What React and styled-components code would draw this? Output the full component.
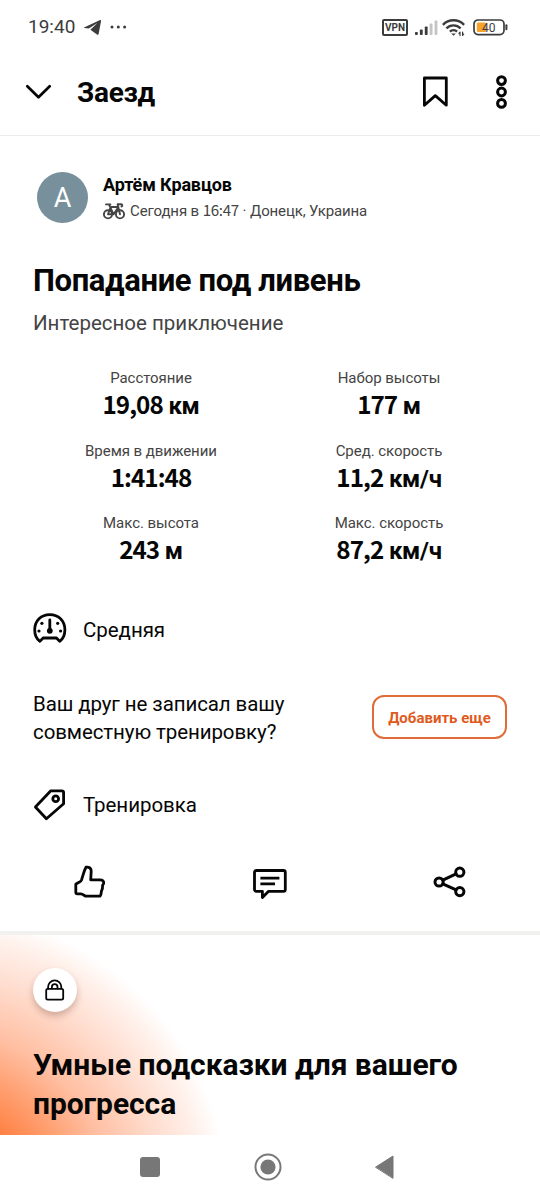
import React from 'react';
import styled, { createGlobalStyle } from 'styled-components';

const GlobalStyle = createGlobalStyle`
  * {
    box-sizing: border-box;
  }
  body {
    margin: 0;
    background: #fff;
    color: #060606;
    font-family: Roboto, 'Liberation Sans', sans-serif;
  }
  svg {
    display: block;
    flex-shrink: 0;
    overflow: visible;
  }
`;

const Screen = styled.div`
  width: 540px;
  height: 1200px;
  display: flex;
  flex-direction: column;
  overflow: hidden;
`;
const StatusBar = styled.div`
  height: 48px;
  padding: 6px 32px 0 28px;
  display: flex;
  align-items: center;
  justify-content: space-between;
  color: #3c3c3c;
`;
const StatusGroup = styled.div`
  display: flex;
  align-items: center;
  gap: ${(props) => props.gap};
`;
const Clock = styled.span`
  font-size: 19px;
  line-height: 22px;
`;
const Vpn = styled.span`
  width: 26px;
  height: 17px;
  border: 2px solid #3c3c3c;
  border-radius: 2px;
  font-size: 10px;
  font-weight: 700;
  line-height: 13px;
  text-align: center;
`;
const Header = styled.header`
  height: 88px;
  padding: 0 32px 0 26px;
  border-bottom: 1px solid #ededed;
  display: flex;
  align-items: center;
`;
const HeaderTitle = styled.h1`
  flex: 1;
  margin: 2px 0 0 26px;
  font-size: 28px;
  font-weight: 700;
  line-height: 34px;
  letter-spacing: -0.3px;
`;
const HeaderActions = styled.div`
  display: flex;
  align-items: center;
  gap: 47px;
`;
const Author = styled.div`
  display: flex;
  padding: 36px 37px 0;
  height: 125px;
  gap: 15px;
`;
const Avatar = styled.div`
  width: 51px;
  height: 51px;
  border-radius: 50%;
  background: #77909c;
  color: #fff;
  font-size: 27px;
  line-height: 53px;
  text-align: center;
`;
const AuthorName = styled.div`
  font-size: 18px;
  font-weight: 700;
  line-height: 26px;
  letter-spacing: -0.15px;
`;
const AuthorMeta = styled.div`
  display: flex;
  align-items: center;
  gap: 5px;
  color: #444;
  font-size: 15px;
  line-height: 26px;
  letter-spacing: -0.12px;
`;
const Title = styled.h2`
  margin: 0;
  padding: 0 33px;
  font-size: 31px;
  font-weight: 700;
  line-height: 40px;
  letter-spacing: -0.37px;
`;
const Description = styled.p`
  margin: 6px 0 0;
  padding: 0 33px;
  color: #444;
  font-size: 20.5px;
  line-height: 32px;
`;
const Stats = styled.div`
  display: grid;
  grid-template-columns: 1fr 1fr;
  grid-auto-rows: 72.5px;
  padding: 27px 32px 0;
  height: 266px;
`;
const Stat = styled.div`
  display: flex;
  flex-direction: column;
  align-items: center;
`;
const StatLabel = styled.span`
  color: #444;
  font-size: 15px;
  line-height: 24px;
  letter-spacing: -0.05px;
`;
const StatValue = styled.span`
  margin-top: 1px;
  font-size: 24px;
  font-weight: 700;
  line-height: 30px;
  letter-spacing: -0.3px;
`;
const Figure = styled.span`
  font-family: 'Noto Sans CJK SC', sans-serif;
  font-size: 1.01em;
  line-height: 1;
  letter-spacing: ${(props) => props.ls};
`;
const Line = styled.div`
  display: flex;
  align-items: center;
  height: ${(props) => props.h};
  padding: 0 33px;
  gap: 16px;
  font-size: 20.5px;
  letter-spacing: -0.05px;
`;
const Invite = styled.div`
  display: flex;
  align-items: center;
  justify-content: space-between;
  height: 106px;
  margin-top: 10px;
  padding: 0 33px;
  font-size: 20.5px;
  line-height: 28.5px;
  letter-spacing: -0.1px;
`;
const AddButton = styled.button`
  width: 135px;
  height: 44px;
  margin-bottom: 2px;
  padding: 0;
  border: 2px solid #e06c3a;
  border-radius: 12px;
  background: #fff;
  color: #de5a20;
  font: 700 15px/42px Roboto, sans-serif;
`;
const Actions = styled.div`
  display: grid;
  grid-template-columns: repeat(3, 1fr);
  justify-items: center;
  align-items: center;
  height: 96px;
  padding-bottom: 7px;
  border-bottom: 4px solid #f1f1f0;
`;
const Insights = styled.section`
  height: 200px;
  padding: 33px 33px 0;
  background: radial-gradient(
    circle at -60px 265px,
    #ff7a38 80px,
    #ff9c6c 125px,
    #ffbfa2 170px,
    #ffddcf 225px,
    #fff1eb 265px,
    #fff 288px
  );
`;
const LockBadge = styled.div`
  width: 44px;
  height: 44px;
  border-radius: 50%;
  background: #fff;
  box-shadow: 0 4px 7px rgb(90 40 20 / 28%);
  display: flex;
  align-items: center;
  justify-content: center;
`;
const InsightsTitle = styled.h2`
  margin: 33px 0 0;
  font-size: 30px;
  font-weight: 700;
  line-height: 39px;
  letter-spacing: -0.07px;
`;
const NavBar = styled.nav`
  flex: 1;
  display: flex;
  align-items: center;
  padding: 0 146px 1px 140px;
  justify-content: space-between;
`;

const Icon = ({ w, h, sw = 2.8, color = 'currentColor', children }) => (
  <svg
    width={w}
    height={h}
    viewBox={`0 0 ${w} ${h}`}
    fill="none"
    stroke={color}
    strokeWidth={sw}
    strokeLinejoin="round"
    strokeLinecap="round"
  >
    {children}
  </svg>
);

const TelegramIcon = () => (
  <Icon w={17} h={15} sw={0}>
    <path d="M0 7.4 15.6.2c.9-.4 1.6.1 1.4 1l-2.4 12.8c-.2.9-.9 1.1-1.6.6L6.4 9.8l7-6.7-8.6 5.4L.4 8.1C-.2 7.9-.3 7.6 0 7.4z" fill="#3c3c3c" />
  </Icon>
);
const MoreDots = () => (
  <Icon w={17} h={4} sw={0}>
    {[2, 8.3, 14.6].map((x) => (
      <circle key={x} cx={x} cy="2" r="1.5" fill="#3c3c3c" />
    ))}
  </Icon>
);
const SignalIcon = () => (
  <Icon w={20} h={15} sw={0}>
    {[3, 5.5, 8.5, 11.5, 14.5].map((height, i) => (
      <rect
        key={height}
        x={i * 4.9}
        y={15 - height}
        width="2.8"
        height={height}
        rx="0.8"
        fill={i < 3 ? '#3c3c3c' : '#c4c4c4'}
      />
    ))}
  </Icon>
);
const WifiIcon = () => (
  <Icon w={24} h={17} sw={2.4}>
    <path d="M.9 5.8a14.6 14.6 0 0 1 21.2 0M4.4 9.4a9.8 9.8 0 0 1 14.2 0M7.9 12.7a5 5 0 0 1 7.2 0" strokeLinecap="butt" />
    <path d="M9.2 14.4h4.6l-2.3 2.4z" fill="currentColor" stroke="none" />
    <path d="M18 16.6v-3.4l-1.1 1.2M20.6 13v3.4l1.1-1.2" strokeWidth="1.2" />
  </Icon>
);
const BatteryIcon = () => (
  <Icon w={35} h={17} sw={1.7}>
    <rect x="1" y="1" width="30" height="14.6" rx="4" />
    <rect x="3.8" y="3.6" width="9.5" height="9.4" rx="1.5" fill="#f6a32c" stroke="none" />
    <path d="M33.4 6.3v4" strokeWidth="2" />
    <text x="15.7" y="12.6" textAnchor="middle" fontSize="12" fill="#3c3c3c" stroke="none">40</text>
  </Icon>
);
const ChevronIcon = () => (
  <Icon w={25} h={14} sw={2.7}>
    <path d="m1.3 1.3 11.2 11 11.2-11" />
  </Icon>
);
const BookmarkIcon = () => (
  <Icon w={26} h={32}>
    <path d="M2.4 2h21.9v27.2L13.3 19.6 2.4 29.2z" />
  </Icon>
);
const MenuIcon = () => (
  <Icon w={13} h={34} sw={3}>
    {[5.6, 17, 28.4].map((y) => (
      <circle key={y} cx="6.5" cy={y} r="3.9" />
    ))}
  </Icon>
);
const BikeIcon = () => (
  <Icon w={22} h={17} sw={1.9}>
    <circle cx="5" cy="11.3" r="4.1" />
    <circle cx="17" cy="11.3" r="4.1" />
    <path d="M3 1.4h4.4M5 11.3 7.6 4h7.8L10.6 11.3H5M6 1.6l4.6 9.7M17 11.3 14.6 1.2h3.6c1.2 0 1.6 1.9.3 2.3" />
  </Icon>
);
const GaugeIcon = () => (
  <Icon w={34} h={34}>
    <path d="M6.9 28.4c-3.3-2.4-5.2-6.6-5.2-11.6C1.7 7.6 8.2 1.6 16.8 1.6S31.9 7.6 31.9 16.8c0 5-1.9 9.2-5.2 11.6L23.5 25H10.1z" />
    <path d="M16.8 7v10" />
    <g fill="currentColor" stroke="none">
      <circle cx="16.8" cy="17.8" r="2.9" />
      <circle cx="8.9" cy="10.3" r="1.6" />
      <circle cx="24.7" cy="10.3" r="1.6" />
      <circle cx="6" cy="18" r="1.6" />
      <circle cx="27.6" cy="18" r="1.6" />
    </g>
  </Icon>
);
const TagIcon = () => (
  <Icon w={34} h={32}>
    <path d="M17.8 1.8h11a1.8 1.8 0 0 1 1.8 1.8v11.2L13.4 29.8 2.4 18z" />
    <circle cx="22.7" cy="9.8" r="2.9" />
  </Icon>
);
const LikeIcon = () => (
  <Icon w={32} h={34}>
    <path d="M12 2.2c2.6-.6 5.4.8 5.2 4l-.5 8.6h9.4c2.4 0 3.8 1.4 3.6 3.4-.1 1-.7 1.5-1.1 2 .2 3-.6 5-1.2 6-.1 1.6-.2 3.8-1.4 5H11.8c-1.8-.4-2.6-2.4-5-2.4H3.4a1.6 1.6 0 0 1-1.6-1.6v-8c3.4-2.4 4.8-2.2 5.6-4C9.2 10.4 9.8 6 12 2.2z" />
  </Icon>
);
const CommentIcon = () => (
  <Icon w={34} h={26}>
    <path d="M3.4 1.5h27a1.9 1.9 0 0 1 1.9 1.9v17a1.9 1.9 0 0 1-1.9 1.9H15.6L9.4 28.6v-6.3h-6a1.9 1.9 0 0 1-1.9-1.9v-17a1.9 1.9 0 0 1 1.9-1.9z" />
    <path d="M7.4 9.2h19M7.4 14.8h14.6" strokeLinecap="butt" />
  </Icon>
);
const ShareIcon = () => (
  <Icon w={34} h={32} sw={3}>
    <circle cx="6.1" cy="16" r="4.1" />
    <circle cx="26.8" cy="6.2" r="4.1" />
    <circle cx="26.8" cy="25.6" r="4.1" />
    <path d="m9.8 14.2 13.3-6.3M9.8 17.8l13.3 6" />
  </Icon>
);
const LockIcon = () => (
  <Icon w={20} h={22} sw={1.8}>
    <rect x="1.2" y="9.8" width="17" height="10.8" rx="1.6" />
    <path d="M3.1 9.6V8a6.6 6.6 0 0 1 13.2 0v1.6M6.9 9.6V8a2.8 2.8 0 0 1 5.6 0v1.6" />
  </Icon>
);

const stats = [
  ['Расстояние', '19,08', ' км'],
  ['Набор высоты', '177', ' м'],
  ['Время в движении', '1:41:48', ''],
  ['Сред. скорость', '11,2', ' км/ч'],
  ['Макс. высота', '243', ' м'],
  ['Макс. скорость', '87,2', ' км/ч'],
];

const App = () => (
  <>
    <GlobalStyle />
    <Screen>
      <StatusBar>
        <StatusGroup gap="9px">
          <Clock>19:40</Clock>
          <TelegramIcon />
          <MoreDots />
        </StatusGroup>
        <StatusGroup gap="7px">
          <Vpn>VPN</Vpn>
          <SignalIcon />
          <WifiIcon />
          <BatteryIcon />
        </StatusGroup>
      </StatusBar>
      <Header>
        <ChevronIcon />
        <HeaderTitle>Заезд</HeaderTitle>
        <HeaderActions>
          <BookmarkIcon />
          <MenuIcon />
        </HeaderActions>
      </Header>
      <Author>
        <Avatar>A</Avatar>
        <div>
          <AuthorName>Артём Кравцов</AuthorName>
          <AuthorMeta>
            <BikeIcon />
            <span>
              Сегодня в <Figure ls="-0.02em">16:47</Figure> · Донецк, Украина
            </span>
          </AuthorMeta>
        </div>
      </Author>
      <Title>Попадание под ливень</Title>
      <Description>Интересное приключение</Description>
      <Stats>
        {stats.map(([label, figure, unit]) => (
          <Stat key={label}>
            <StatLabel>{label}</StatLabel>
            <StatValue>
              <Figure ls="-0.04em">{figure}</Figure>
              {unit}
            </StatValue>
          </Stat>
        ))}
      </Stats>
      <Line h="50px">
        <GaugeIcon />
        Средняя
      </Line>
      <Invite>
        <span>
          Ваш друг не записал вашу
          <br />
          совместную тренировку?
        </span>
        <AddButton>Добавить еще</AddButton>
      </Invite>
      <Line h="68px">
        <TagIcon />
        Тренировка
      </Line>
      <Actions>
        <LikeIcon />
        <CommentIcon />
        <ShareIcon />
      </Actions>
      <Insights>
        <LockBadge>
          <LockIcon />
        </LockBadge>
        <InsightsTitle>Умные подсказки для вашего прогресса</InsightsTitle>
      </Insights>
      <NavBar>
        <Icon w={20} h={20} sw={0}>
          <rect width="20" height="20" rx="3" fill="#777" />
        </Icon>
        <Icon w={28} h={28} sw={2} color="#777">
          <circle cx="14" cy="14" r="12.5" />
          <circle cx="14" cy="14" r="7.6" fill="#777" stroke="none" />
        </Icon>
        <Icon w={19} h={24} sw={1} color="#777">
          <path d="M.8 12 18 1v22z" fill="#777" />
        </Icon>
      </NavBar>
    </Screen>
  </>
);

export default App;
